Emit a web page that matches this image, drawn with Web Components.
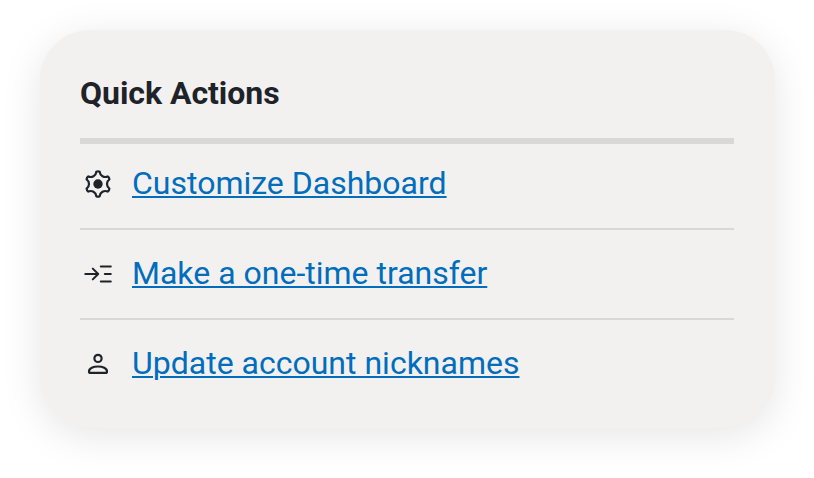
<!DOCTYPE html>
<html lang="en">
<head>
<meta charset="utf-8">
<title>Quick Actions</title>
<style>
  body {
    box-sizing: border-box;
    min-height: 100vh;
    margin: 0;
    padding: 30px 39px 0 40px;
    background: #fff;
    font-family: Roboto, sans-serif;
    font-size: 32px;
    color: #1e2329;
  }
</style>
</head>
<body>
<quick-card>
  <span slot="title">Quick Actions</span>
  <quick-action icon="gear">Customize Dashboard</quick-action>
  <quick-action icon="transfer">Make a one-time transfer</quick-action>
  <quick-action icon="person">Update account nicknames</quick-action>
</quick-card>

<script>
const icons = {
  gear: `
    <g transform="translate(18 18)">
      <path stroke-width="2.2" stroke-linejoin="round" d="M-1.7-12.2Q0-13 1.7-12.2C2.02-8.3 6.18-5.9 9.72-7.57Q11.26-6.5 11.42-4.63C8.2-2.4 8.2 2.4 11.42 4.63Q11.26 6.5 9.72 7.57C6.18 5.9 2.02 8.3 1.7 12.2Q0 13-1.7 12.2C-2.02 8.3-6.18 5.9-9.72 7.57Q-11.26 6.5-11.42 4.63C-8.2 2.4-8.2-2.4-11.42-4.63Q-11.26-6.5-9.72-7.57C-6.18-5.9-2.02-8.3-1.7-12.2z"/>
      <circle r="4.7" fill="currentColor" stroke="none"/>
    </g>`,
  transfer: `
    <path stroke-linecap="round" stroke-linejoin="round" d="M5.3 18H18M12.8 12.6 18.2 18l-5.4 5.4M20.8 10.5h10M24.8 18h6M20.8 25.5h10"/>`,
  person: `
    <circle cx="18" cy="12.4" r="3.6" stroke-width="2.2"/>
    <path stroke-width="2.2" d="M9 25.4c0-3.2 4.4-4.9 9-4.9s9 1.7 9 4.9c0 1-.5 1.5-1.6 1.5H10.6c-1.1 0-1.6-.5-1.6-1.5z"/>`
};

class QuickCard extends HTMLElement {
  constructor() {
    super();
    this.attachShadow({ mode: "open" });
  }

  connectedCallback() {
    this.shadowRoot.innerHTML = `
      <style>
        :host {
          display: block;
          box-sizing: border-box;
          height: 398px;
          padding: 40px 41px 0 40px;
          border-radius: 50px;
          background: #f3f1f0;
          box-shadow: 0 8px 40px rgba(0, 0, 0, 0.1);
        }
        h2 {
          margin: 0;
          height: 68px;
          line-height: 46px;
          font-size: 32px;
          font-weight: 700;
          letter-spacing: -0.04px;
          border-bottom: 6px solid #d9d8d6;
        }
      </style>
      <h2><slot name="title"></slot></h2>
      <slot></slot>
    `;
  }
}

class QuickAction extends HTMLElement {
  constructor() {
    super();
    this.attachShadow({ mode: "open" });
  }

  connectedCallback() {
    this.shadowRoot.innerHTML = `
      <style>
        :host {
          display: flex;
          align-items: center;
          gap: 16px;
          box-sizing: border-box;
          height: 90px;
          border-bottom: 2px solid #d9d8d6;
        }
        :host(:first-of-type) {
          height: 86px;
          padding-bottom: 4px;
        }
        :host(:last-of-type) {
          border-bottom: 0;
          padding-bottom: 2px;
        }
        svg {
          width: 36px;
          height: 36px;
          fill: none;
          stroke: currentColor;
          stroke-width: 2;
        }
        a {
          color: #006dbd;
          line-height: 46px;
          padding-bottom: 2px;
          text-decoration: underline;
          text-decoration-thickness: 2px;
          text-underline-offset: 2px;
        }
      </style>
      <svg viewBox="0 0 36 36" aria-hidden="true">${icons[this.getAttribute("icon")]}</svg>
      <a href="#"><slot></slot></a>
    `;
  }
}

customElements.define("quick-card", QuickCard);
customElements.define("quick-action", QuickAction);
</script>
</body>
</html>
